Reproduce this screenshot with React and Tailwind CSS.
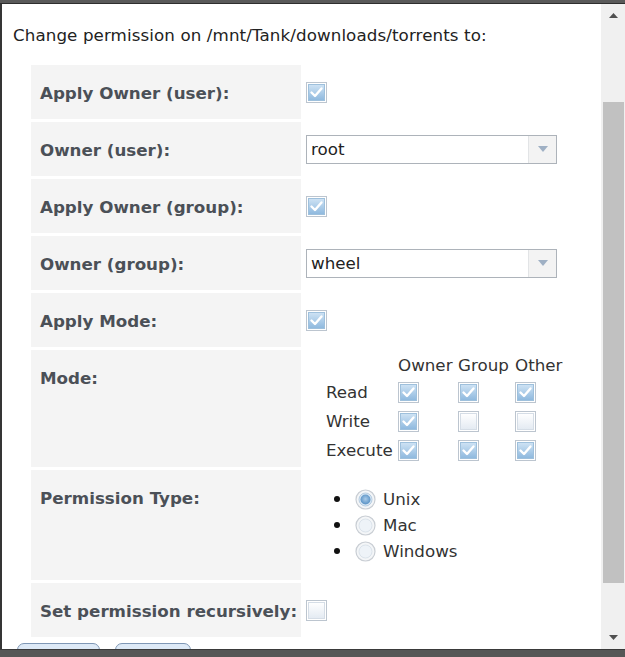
import React from "react";

function Check({ checked }) {
  return (
    <svg width="21" height="21" viewBox="0 0 21 21" className="block shrink-0">
      <defs>
        <linearGradient id="cbOn" x1="0" y1="0" x2="0" y2="1">
          <stop offset="0" stopColor="#cfe3f4" />
          <stop offset="1" stopColor="#8db8de" />
        </linearGradient>
        <linearGradient id="cbOff" x1="0" y1="0" x2="0" y2="1">
          <stop offset="0" stopColor="#ffffff" />
          <stop offset="1" stopColor="#e3eaf2" />
        </linearGradient>
      </defs>
      <rect x="0.5" y="0.5" width="20" height="20" fill="#ffffff" stroke="#bcc5cf" />
      <rect x="2.5" y="2.5" width="16" height="16" fill={checked ? "url(#cbOn)" : "url(#cbOff)"} stroke={checked ? "#9ec0dc" : "#d5dde6"} />
      {checked && (
        <path d="M5.5 10.5 L9 14 L15.5 6.5" fill="none" stroke="#ffffff" strokeWidth="2.4" strokeLinecap="round" strokeLinejoin="round" />
      )}
    </svg>
  );
}

function Radio({ checked }) {
  return (
    <svg width="21" height="21" viewBox="0 0 21 21" className="block shrink-0">
      <defs>
        <radialGradient id="rdOn" cx="0.5" cy="0.45" r="0.5">
          <stop offset="0" stopColor="#a9cbe9" />
          <stop offset="1" stopColor="#5f96c8" />
        </radialGradient>
      </defs>
      <circle cx="10.5" cy="10.5" r="9.5" fill="#f4f6f8" stroke="#c9ced4" strokeWidth="1.2" />
      <circle cx="10.5" cy="10.5" r="6.5" fill={checked ? "#dbe8f4" : "#eef3f8"} stroke={checked ? "#b6cde2" : "#dbe3eb"} />
      {checked && <circle cx="10.5" cy="10.5" r="5" fill="url(#rdOn)" />}
    </svg>
  );
}

function Select({ value }) {
  return (
    <div className="flex h-[29px] w-[251px] border border-[#adb3ba] bg-white">
      <div className="flex flex-1 items-center pl-[4px] text-[#222]">{value}</div>
      <div className="flex w-[28px] items-center justify-center border-l border-[#e2e4e6] bg-[#f3f3f3]">
        <svg width="10" height="6" viewBox="0 0 10 6">
          <path d="M0 0 L10 0 L5 6 Z" fill="#9fb0c4" />
        </svg>
      </div>
    </div>
  );
}

function Row({ label, h, children }) {
  return (
    <div className="flex gap-[3px]" style={{ height: h }}>
      <div className="w-[270px] shrink-0 bg-[#f4f4f4] pl-[9px] pt-[18px] font-bold text-[#4b5057]">
        {label}
      </div>
      <div className="flex flex-1 items-center pl-[2px]">{children}</div>
    </div>
  );
}

export default function App() {
  const modes = [
    ["Read", true, true, true],
    ["Write", true, false, false],
    ["Execute", true, true, true],
  ];
  const types = [
    ["Unix", true],
    ["Mac", false],
    ["Windows", false],
  ];
  return (
    <div
      className="flex h-[657px] w-[625px] flex-col overflow-hidden bg-white text-[16.7px] leading-[20px]"
      style={{ fontFamily: '"DejaVu Sans", Verdana, sans-serif' }}
    >
      <div className="h-[4px] shrink-0 border-b border-[#2e2e2e] bg-[#5a5a5a]" />
      <div className="flex min-h-0 flex-1 border-l-2 border-[#353535]">
        <div className="min-w-0 flex-1 overflow-hidden pl-[11px] pt-[21px]">
          <div className="tracking-[0.1px] text-[#222]">Change permission on /mnt/Tank/downloads/torrents to:</div>
          <div className="ml-[18px] mt-[20px] flex w-[570px] flex-col gap-[3px]">
            <Row label="Apply Owner (user):" h={54}>
              <Check checked />
            </Row>
            <Row label="Owner (user):" h={54}>
              <Select value="root" />
            </Row>
            <Row label="Apply Owner (group):" h={54}>
              <Check checked />
            </Row>
            <Row label="Owner (group):" h={54}>
              <Select value="wheel" />
            </Row>
            <Row label="Apply Mode:" h={54}>
              <Check checked />
            </Row>
            <Row label="Mode:" h={117}>
              <div className="ml-[20px] grid grid-cols-[72px_60px_57px_50px] text-[#333]">
                <div className="h-[25px]" />
                <div className="flex h-[25px] items-center">Owner</div>
                <div className="flex h-[25px] items-center">Group</div>
                <div className="flex h-[25px] items-center">Other</div>
                {modes.map(([name, a, b, c]) => (
                  <React.Fragment key={name}>
                    <div className="flex h-[29px] items-center">{name}</div>
                    <div className="flex h-[29px] items-center">
                      <Check checked={a} />
                    </div>
                    <div className="flex h-[29px] items-center">
                      <Check checked={b} />
                    </div>
                    <div className="flex h-[29px] items-center">
                      <Check checked={c} />
                    </div>
                  </React.Fragment>
                ))}
              </div>
            </Row>
            <Row label="Permission Type:" h={110}>
              <ul className="ml-[28px] flex flex-col text-[#333]">
                {types.map(([t, on]) => (
                  <li key={t} className="flex h-[26px] items-center">
                    <span className="h-[6px] w-[6px] rounded-full bg-[#111]" />
                    <span className="ml-[15px]">
                      <Radio checked={on} />
                    </span>
                    <span className="ml-[7px]">{t}</span>
                  </li>
                ))}
              </ul>
            </Row>
            <Row label="Set permission recursively:" h={54}>
              <Check checked={false} />
            </Row>
          </div>
          <div className="ml-[4px] mt-[6px] flex gap-[15px]">
            <div className="h-[30px] w-[83px] rounded-t-[7px] border border-[#7f97b5] bg-[#dde9f6]" />
            <div className="h-[30px] w-[76px] rounded-t-[7px] border border-[#7f97b5] bg-[#dde9f6]" />
          </div>
        </div>
        <div className="flex w-[24px] shrink-0 flex-col bg-[#f0f0f0]">
          <div className="flex h-[23px] shrink-0 items-center justify-center">
            <svg width="9" height="5" viewBox="0 0 9 5">
              <path d="M0 5 L9 5 L4.5 0 Z" fill="#505050" />
            </svg>
          </div>
          <div className="min-h-0 flex-1">
            <div className="ml-[2px] mt-[75px] h-[481px] w-[21px] bg-[#c1c1c1]" />
          </div>
          <div className="flex h-[23px] shrink-0 items-center justify-center">
            <svg width="9" height="5" viewBox="0 0 9 5">
              <path d="M0 0 L9 0 L4.5 5 Z" fill="#505050" />
            </svg>
          </div>
        </div>
      </div>
      <div className="h-[8px] shrink-0 border-t border-[#3a3a3a] bg-[#565656]" />
    </div>
  );
}
